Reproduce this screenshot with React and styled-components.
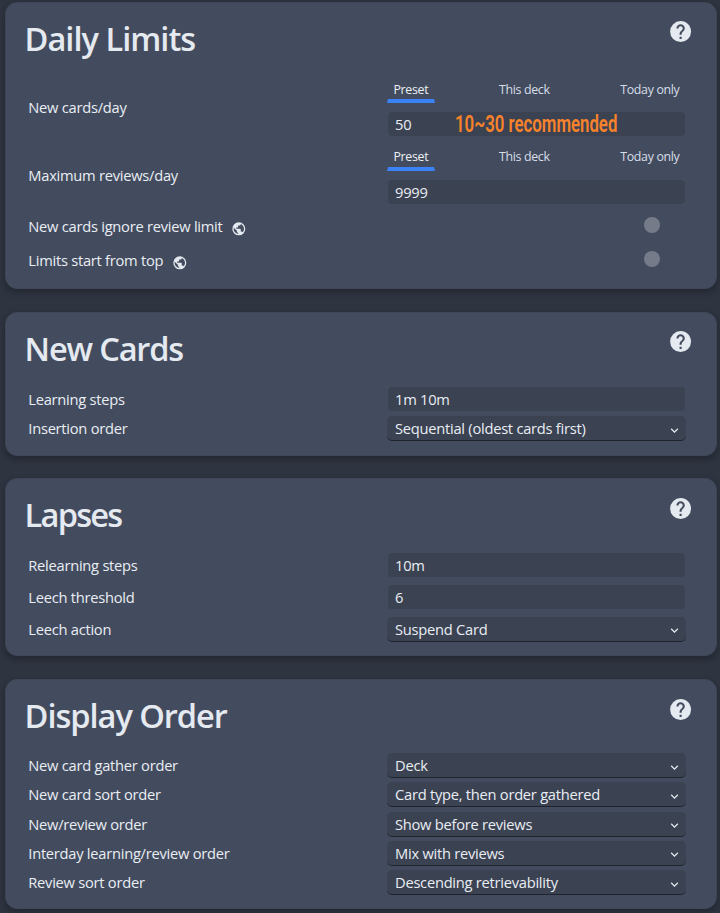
import React from "react";
import styled, { createGlobalStyle } from "styled-components";

const GlobalStyle = createGlobalStyle`
  * { box-sizing: border-box; }
  body {
    margin: 0;
    background: #2e3440;
    color: #e9edf4;
    font-family: "Open Sans", "Noto Sans", sans-serif;
    font-size: 14.7px;
    letter-spacing: -0.26px;
    overflow: hidden;
  }
`;

const Page = styled.main`
  display: flex;
  flex-direction: column;
  height: 913px;
  padding: 2px 3px 0 5px;
`;

const Card = styled.section`
  flex: none;
  height: ${(p) => p.$height}px;
  margin-bottom: ${(p) => p.$gap}px;
  background: #434c5e;
  border: 1px solid #3e4657;
  border-radius: 12px;
  box-shadow: 0 3px 6px rgba(20, 22, 28, 0.45);
`;

const Header = styled.header`
  display: flex;
  justify-content: space-between;
  height: ${(p) => p.$height - 1}px;
  padding: 0 22.6px 0 18.6px;
`;

const Title = styled.h1`
  margin: 13px 0 0;
  color: #e5e9f0;
  font-size: 32.6px;
  font-weight: 600;
  line-height: 46px;
  letter-spacing: ${(p) => p.$track}px;
  white-space: nowrap;
`;

const HelpIcon = styled.svg`
  width: 25.2px;
  height: 25.2px;
  margin-top: ${(p) => p.$top}px;
  fill: #e5e9f0;
`;

const Row = styled.div`
  display: grid;
  grid-template-columns: 359px 299px;
  align-items: center;
  height: ${(p) => p.$height}px;
  padding-left: 22px;
`;

const Label = styled.div`
  display: flex;
  align-items: center;
  padding: 0 0 ${(p) => (p.$raised ? 2 : 0)}px 0.3px;
  line-height: 20px;
  white-space: nowrap;
`;

const GlobeIcon = styled.svg`
  width: 15.6px;
  height: 15.6px;
  margin: 5px 0 0 8.4px;
  fill: #e5e9f0;
`;

const Field = styled.div`
  display: flex;
  align-items: center;
  height: 24px;
  margin: 0 1px;
  padding-left: 7px;
  border-radius: 4px;
  background: #3b4252;
`;

const Note = styled.span`
  width: 161px;
  margin-left: 43.8px;
  color: #f9832b;
  font-family: Roboto, sans-serif;
  font-size: 23.5px;
  font-weight: 600;
  letter-spacing: 0;
  line-height: 24px;
  white-space: nowrap;
  transform: scaleX(0.715);
  transform-origin: left center;
`;

const Select = styled.div`
  display: flex;
  align-items: center;
  justify-content: space-between;
  height: 25px;
  padding: 0 4px 0 8px;
  border-radius: 5px;
  border-bottom: 1px solid #20232b;
  background: #3b4252;
`;

const Chevron = styled.svg`
  width: 15px;
  height: 15px;
  margin-top: 4px;
  fill: #e5e9f0;
`;

const Tabs = styled.div`
  display: flex;
  justify-content: space-between;
  height: 23px;
  margin-bottom: 9px;
`;

const Tab = styled.div`
  padding: 0 5.5px;
  border: solid transparent;
  border-width: 0 1px 4px;
  border-bottom-color: ${(p) => (p.$active ? "#3b82f6" : "transparent")};
  color: ${(p) => (p.$active ? "#eceff4" : "#d8dee9")};
  font-size: 12.4px;
  letter-spacing: -0.33px;
  line-height: ${(p) => (p.$raised ? 17 : 19)}px;
  white-space: nowrap;
`;

const Toggle = styled.div`
  width: 16px;
  height: 16px;
  margin: -4px 0 0 257px;
  border-radius: 50%;
  background: #757b88;
`;

const Help = ({ top }) => (
  <HelpIcon $top={top} viewBox="0 0 24 24">
    <path d="M15.07,11.25L14.17,12.17C13.45,12.89 13,13.5 13,15H11V14.5C11,13.39 11.45,12.39 12.17,11.67L13.41,10.41C13.78,10.05 14,9.55 14,9C14,7.89 13.1,7 12,7A2,2 0 0,0 10,9H8A4,4 0 0,1 12,5A4,4 0 0,1 16,9C16,9.88 15.64,10.67 15.07,11.25M13,19H11V17H13M12,2A10,10 0 0,0 2,12A10,10 0 0,0 12,22A10,10 0 0,0 22,12C22,6.47 17.5,2 12,2Z" />
  </HelpIcon>
);

const Globe = () => (
  <GlobeIcon viewBox="0 0 24 24">
    <path d="M17.9,17.39C17.64,16.59 16.89,16 16,16H15V13A1,1 0 0,0 14,12H8V10H10A1,1 0 0,0 11,9V7H13A2,2 0 0,0 15,5V4.59C17.93,5.77 20,8.64 20,12C20,14.08 19.2,15.97 17.9,17.39M11,19.93C7.05,19.44 4,16.08 4,12C4,11.38 4.08,10.78 4.21,10.21L9,15V16A2,2 0 0,0 11,18M12,2A10,10 0 0,0 2,12A10,10 0 0,0 12,22A10,10 0 0,0 22,12A10,10 0 0,0 12,2Z" />
  </GlobeIcon>
);

const Control = ({ kind, value, note, raisedTabs }) => {
  if (kind === "select") {
    return (
      <Select>
        {value}
        <Chevron viewBox="0 0 24 24">
          <path d="M7.41,8.58L12,13.17L16.59,8.58L18,10L12,16L6,10L7.41,8.58Z" />
        </Chevron>
      </Select>
    );
  }
  if (kind === "toggle") return <Toggle />;
  const field = (
    <Field>
      {value}
      {note && <Note>{note}</Note>}
    </Field>
  );
  if (kind !== "tabs") return field;
  return (
    <div>
      <Tabs>
        <Tab $active $raised={raisedTabs}>Preset</Tab>
        <Tab $raised={raisedTabs}>This deck</Tab>
        <Tab $raised={raisedTabs}>Today only</Tab>
      </Tabs>
      {field}
    </div>
  );
};

const sections = [
  {
    title: "Daily Limits", track: -1, height: 287, gap: 23, header: 72, help: 15.9,
    rows: [
      { label: "New cards/day", kind: "tabs", value: "50", note: "10~30 recommended", h: 68, raised: true },
      { label: "Maximum reviews/day", kind: "tabs", value: "9999", h: 68, raised: true, raisedTabs: true },
      { label: "New cards ignore review limit", kind: "toggle", globe: true, h: 34, raised: true },
      { label: "Limits start from top", kind: "toggle", globe: true, h: 34, raised: true },
    ],
  },
  {
    title: "New Cards", track: -1.18, height: 144, gap: 22, header: 72, help: 15.9,
    rows: [
      { label: "Learning steps", kind: "input", value: "1m 10m", h: 30 },
      { label: "Insertion order", kind: "select", value: "Sequential (oldest cards first)", h: 29, raised: true },
    ],
  },
  {
    title: "Lapses", track: -1.75, height: 178, gap: 23, header: 71, help: 16.9,
    rows: [
      { label: "Relearning steps", kind: "input", value: "10m", h: 32 },
      { label: "Leech threshold", kind: "input", value: "6", h: 32 },
      { label: "Leech action", kind: "select", value: "Suspend Card", h: 32 },
    ],
  },
  {
    title: "Display Order", track: -1.05, height: 230, gap: 0, header: 72, help: 16.9,
    rows: [
      { label: "New card gather order", kind: "select", value: "Deck", h: 29.25, raised: true },
      { label: "New card sort order", kind: "select", value: "Card type, then order gathered", h: 29.25, raised: true },
      { label: "New/review order", kind: "select", value: "Show before reviews", h: 29.25 },
      { label: "Interday learning/review order", kind: "select", value: "Mix with reviews", h: 29.25 },
      { label: "Review sort order", kind: "select", value: "Descending retrievability", h: 29.25, raised: true },
    ],
  },
];

export default function App() {
  return (
    <>
      <GlobalStyle />
      <Page>
        {sections.map((s) => (
          <Card key={s.title} $height={s.height} $gap={s.gap}>
            <Header $height={s.header}>
              <Title $track={s.track}>{s.title}</Title>
              <Help top={s.help} />
            </Header>
            {s.rows.map((r) => (
              <Row key={r.label} $height={r.h}>
                <Label $raised={r.raised}>
                  {r.label}
                  {r.globe && <Globe />}
                </Label>
                <Control kind={r.kind} value={r.value} note={r.note} raisedTabs={r.raisedTabs} />
              </Row>
            ))}
          </Card>
        ))}
      </Page>
    </>
  );
}
